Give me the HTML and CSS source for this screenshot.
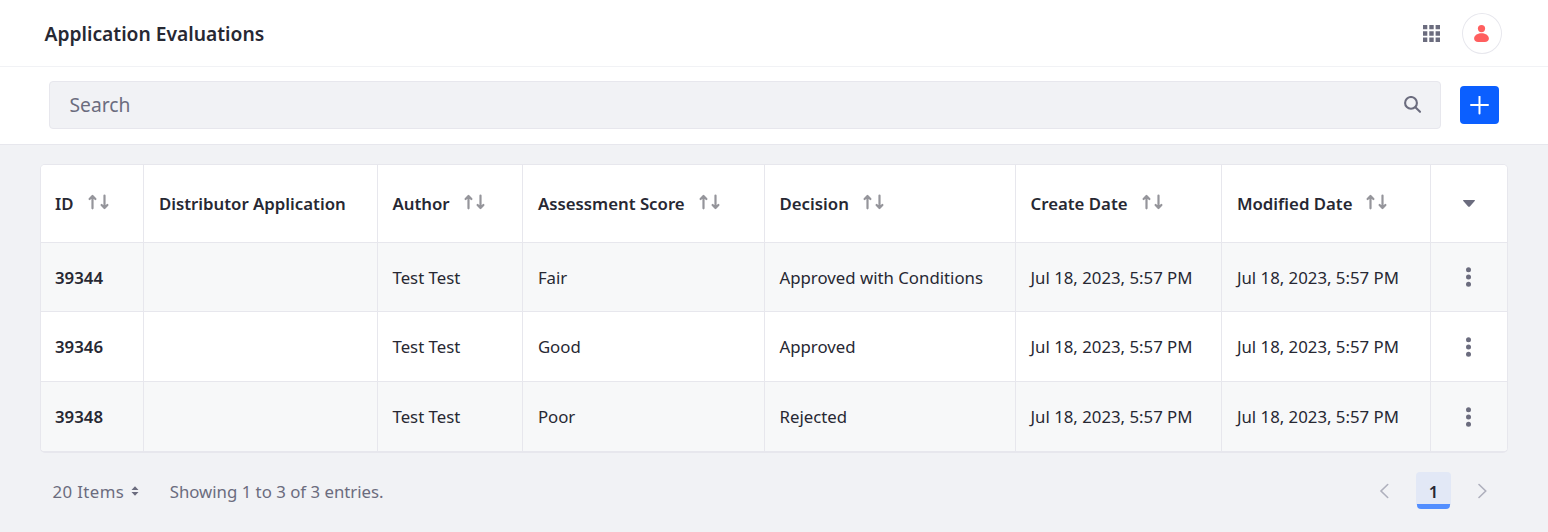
FILE: index.html
```html
<!DOCTYPE html>
<html lang="en">
<head>
<meta charset="utf-8">
<title>Application Evaluations</title>
<link rel="stylesheet" href="styles.css">
</head>
<body>
<svg class="defs" aria-hidden="true">
  <symbol id="sort" viewBox="0 0 22 16"><path d="M4.500 14.300V3M16.500 1.600V13M1.600 5 4.500 2l2.900 3M13.600 11l2.900 3 2.900-3" fill="none" stroke="#95959b" stroke-width="2.200" stroke-linecap="round" stroke-linejoin="round"/><path d="M1.600 5 4.500 2l2.900 3zM13.600 11l2.900 3 2.900-3z" fill="#95959b"/></symbol>
  <symbol id="dots" viewBox="0 0 5 20"><circle cx="2.500" cy="2.800" r="2.500"/><circle cx="2.500" cy="10" r="2.500"/><circle cx="2.500" cy="17.200" r="2.500"/></symbol>
</svg>
<header class="header">
  <h1 class="title">Application Evaluations</h1>
  <div class="header-actions">
    <svg class="apps" viewBox="0 0 17 17"><path d="M0 0h4.300v4.300H0zM6.300 0h4.400v4.300H6.300zM12.600 0H17v4.300h-4.400zM0 6.300h4.300v4.400H0zM6.300 6.300h4.400v4.400H6.300zM12.600 6.300H17v4.400h-4.400zM0 12.600h4.300V17H0zM6.300 12.600h4.400V17H6.300zM12.600 12.600H17V17h-4.400z"/></svg>
    <span class="avatar"><svg width="15" height="17" viewBox="0 0 15 17"><circle cx="7.500" cy="3.600" r="3.600"/><path d="M7.500 8.200c4.500 0 7.400 2.500 7.400 5.400 0 2.400-1.700 3.400-4 3.400H4.100c-2.300 0-4-1-4-3.400 0-2.900 2.900-5.400 7.400-5.400z"/></svg></span>
  </div>
</header>
<div class="toolbar">
  <div class="search"><span>Search</span><svg width="18" height="18" viewBox="0 0 18 18"><circle cx="7" cy="6.900" r="5.900"/><path d="m11.400 11.300 4.600 4.500"/></svg></div>
  <button class="add" aria-label="Add"><svg width="19" height="19" viewBox="0 0 19 19"><path d="M9.500.6v17M1 9.100h17"/></svg></button>
</div>
<main class="main">
  <table class="table">
    <colgroup><col class="c-id"><col class="c-app"><col class="c-author"><col class="c-score"><col class="c-decision"><col class="c-created"><col class="c-modified"><col class="c-menu"></colgroup>
    <thead><tr>
      <th>ID<svg class="sort"><use href="#sort"/></svg></th>
      <th>Distributor Application</th>
      <th>Author<svg class="sort"><use href="#sort"/></svg></th>
      <th>Assessment Score<svg class="sort"><use href="#sort"/></svg></th>
      <th>Decision<svg class="sort"><use href="#sort"/></svg></th>
      <th>Create Date<svg class="sort"><use href="#sort"/></svg></th>
      <th>Modified Date<svg class="sort"><use href="#sort"/></svg></th>
      <th class="menu"><svg class="caret" viewBox="0 0 12 7"><path d="M.6 0h10.800q1 .2.300 1.100L6.900 6.400q-.9.900-1.800 0L.3 1.100Q-.4.200.6 0z"/></svg></th>
    </tr></thead>
    <tbody>
      <tr><td class="id">39344</td><td></td><td>Test Test</td><td>Fair</td><td>Approved with Conditions</td><td>Jul 18, 2023, 5:57 PM</td><td>Jul 18, 2023, 5:57 PM</td><td class="menu"><svg class="dots"><use href="#dots"/></svg></td></tr>
      <tr><td class="id">39346</td><td></td><td>Test Test</td><td>Good</td><td>Approved</td><td>Jul 18, 2023, 5:57 PM</td><td>Jul 18, 2023, 5:57 PM</td><td class="menu"><svg class="dots"><use href="#dots"/></svg></td></tr>
      <tr><td class="id">39348</td><td></td><td>Test Test</td><td>Poor</td><td>Rejected</td><td>Jul 18, 2023, 5:57 PM</td><td>Jul 18, 2023, 5:57 PM</td><td class="menu"><svg class="dots"><use href="#dots"/></svg></td></tr>
    </tbody>
  </table>
  <div class="footer">
    <span class="per-page">20 Items</span>
    <svg class="updown" viewBox="0 0 8 10"><path d="M.5 4 4 .2 7.500 4zM.5 6 4 9.800 7.500 6z"/></svg>
    <span class="summary">Showing 1 to 3 of 3 entries.</span>
    <nav class="pager">
      <svg class="arrow" viewBox="0 0 10 16"><path d="M8.700 1.500 2 8l6.700 6.500"/></svg>
      <span class="page">1</span>
      <svg class="arrow" viewBox="0 0 10 16"><path d="M1 1.500 7.700 8 1 14.500"/></svg>
    </nav>
  </div>
</main>
</body>
</html>
```
FILE: styles.css
```css
* { box-sizing: border-box; }
body { margin: 0; height: 532px; overflow: hidden; background: #f1f2f5; color: #272833; font: 16.8px/24px "Noto Sans", sans-serif; }
svg { display: block; flex: none; }
.defs { position: absolute; width: 0; height: 0; }
.header { display: flex; align-items: center; justify-content: space-between; height: 67px; padding: 0 46px 0 44.5px; background: #fff; border-bottom: 1px solid #f1f2f5; }
.title { margin: 0; padding-top: 2px; font-size: 19.25px; font-weight: 600; line-height: 28px; }
.header-actions { display: flex; align-items: center; gap: 22px; }
.apps { width: 17px; height: 17px; fill: #6b6c7e; }
.avatar { display: flex; align-items: center; justify-content: center; width: 40px; height: 41px; padding-right: 1px; border: 1px solid #e7e7ed; border-radius: 50%; fill: #ff5f5f; }
.toolbar { display: flex; align-items: center; gap: 19px; height: 78px; padding: 0 49px 1px; background: #fff; border-bottom: 1px solid #e7e7ed; }
.search { display: flex; flex: 1; align-items: center; justify-content: space-between; height: 48px; padding: 0 18.5px 0 19.5px; background: #f1f2f5; border: 1px solid #e7e7ed; border-radius: 4px; color: #6b6c7e; font-size: 19.25px; }
.search svg { fill: none; stroke: #6b6c7e; stroke-width: 2.1; stroke-linecap: round; }
.add { display: flex; align-items: center; justify-content: center; width: 39px; height: 38px; padding: 0; background: #0b5fff; border: 0; border-radius: 4px; }
.add svg { fill: none; stroke: #fff; stroke-width: 2; stroke-linecap: round; }
.main { padding: 19px 40px 0; }
.table { width: 1468px; table-layout: fixed; border-collapse: separate; border-spacing: 0; border: solid #e7e7ed; border-width: 1px 1px 2px; border-radius: 5px; overflow: hidden; background: #fff; }
.c-id { width: 102px; }
.c-app { width: 234px; }
.c-author { width: 145px; }
.c-score { width: 242px; }
.c-decision { width: 251px; }
.c-created { width: 206px; }
.c-modified { width: 209px; }
.c-menu { width: 77px; }
th, td { height: 70px; padding: 0 0 0 14.5px; border-left: 1px solid #e7e7ed; text-align: left; white-space: nowrap; vertical-align: middle; }
th { height: 77px; background: #fff; font-weight: 600; }
th:nth-child(2), th:nth-child(4), td:nth-child(4), th:nth-child(7), td:nth-child(7) { padding-left: 14.9px; }
th:first-child, td:first-child { padding-left: 14px; border-left: 0; }
td { border-top: 1px solid #e7e7ed; }
tbody tr:first-child td { height: 69px; padding-top: 1px; }
tbody tr:nth-child(odd) td { background: #f7f8f9; }
.id { font-weight: 600; }
.sort { display: inline-block; width: 22px; height: 16px; margin-left: 14px; vertical-align: 0; }
.table .menu { padding: 0 1px 0 0; }
.caret { width: 12px; height: 7px; margin: 0 auto; fill: #6b6c7e; }
.dots { width: 5px; height: 20px; margin: 0 auto; fill: #6b6c7e; }
.footer { display: flex; align-items: center; height: 37px; margin-top: 19px; padding: 0 20px 0 12.5px; color: #6b6c7e; }
.per-page { padding-top: 2px; letter-spacing: .4px; }
.updown { width: 8px; height: 10px; margin: 1px 0 0 6.9px; fill: #6b6c7e; }
.summary { margin-left: 30.6px; padding-top: 2px; }
.pager { display: flex; align-items: center; gap: 27px; margin-left: auto; }
.arrow { width: 10px; height: 16px; fill: none; stroke: #afb0bd; stroke-width: 1.6; stroke-linecap: round; }
.page { position: relative; display: flex; align-items: center; justify-content: center; width: 35px; height: 37px; padding-top: 3px; background: linear-gradient(#e2e8f6, #e2e8f6) top / 100% 33px no-repeat; border-radius: 4px; color: #272833; font-weight: 600; }
.page::after { content: ""; position: absolute; inset: auto 1px 0; height: 8px; border-bottom: 5px solid #528eff; border-radius: 4px; }
```
